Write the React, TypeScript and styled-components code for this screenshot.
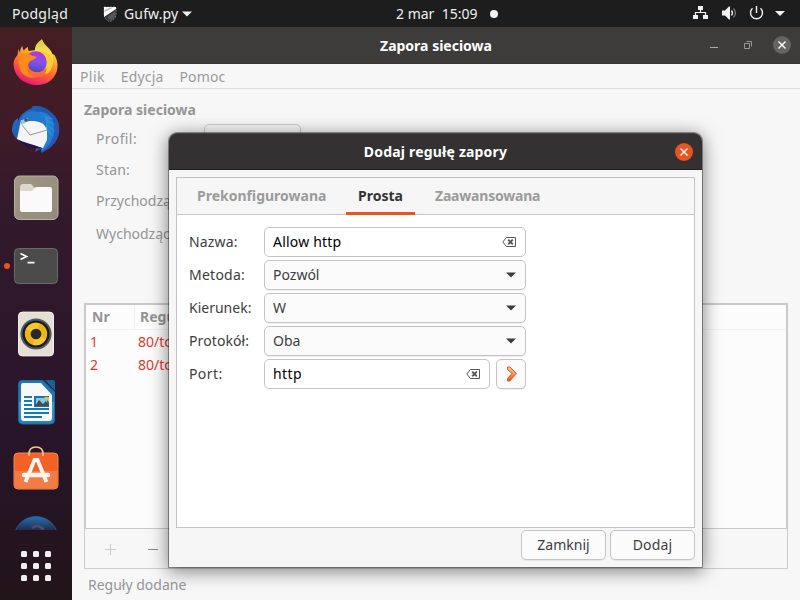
import React from "react";
import styled, { createGlobalStyle } from "styled-components";

const Global = createGlobalStyle`
  * { box-sizing: border-box; }
  html, body { margin: 0; padding: 0; }
  body { width: 800px; height: 600px; overflow: hidden; background: #f7f7f7;
    font-family: "Noto Sans", "Open Sans", sans-serif; font-size: 14px; line-height: 20px; color: #3d3d3d; }
`;

const Desktop = styled.div`
  width: 800px; height: 600px; display: flex; flex-direction: column; overflow: hidden; position: relative;
`;
const Label = styled.span<{ $ls?: number; $bold?: boolean }>`
  white-space: pre;
  letter-spacing: ${(p) => p.$ls ?? 0}px;
  font-weight: ${(p) => (p.$bold ? 700 : 400)};
`;

/* Top panel */
const TopBar = styled.header`
  flex: 0 0 27px; display: grid; grid-template-columns: 396px 1fr auto; align-items: center;
  background: #1d1d1d; color: #f0f0f0;
`;
const TopLeft = styled.div`
  display: flex; align-items: center; padding-left: 12px;
  & > svg:nth-of-type(1) { margin-left: 35px; margin-right: 7px; }
  & > svg:nth-of-type(2) { margin-left: 4px; }
`;
const Clock = styled.div`display: flex; align-items: center; gap: 13px;`;
const Dot = styled.i`width: 8px; height: 8px; border-radius: 50%; background: #f2f2f2;`;
const Tray = styled.div`display: flex; align-items: center; width: 108px;`;

const Main = styled.div`flex: 1; display: flex; min-height: 0;`;

/* Dock */
const Dock = styled.nav`
  flex: 0 0 72px; display: flex; flex-direction: column;
  background: linear-gradient(180deg, #451e23 0, #401b27 90px, #321a2c 185px, #2f182c 260px, #29152a 400px, #241420 500px, #221519 573px);
`;
const DockList = styled.div`
  height: 503px; overflow: hidden; display: flex; flex-direction: column; padding-top: 1px;
`;
const Slot = styled.div<{ $lift?: number }>`
  flex: 0 0 68px; display: flex; align-items: center; justify-content: center; position: relative;
  padding-bottom: ${(p) => p.$lift ?? 0}px;
  & > svg { display: block; }
`;
const Running = styled.i`
  position: absolute; left: 4px; top: 31px; width: 6px; height: 6px; border-radius: 50%; background: #e95420;
`;
const AppGrid = styled.div`
  flex: 1; display: grid; grid-template-columns: repeat(3, 6px); grid-auto-rows: 6px; gap: 6px;
  padding: 21px 0 0 21px;
  & > i { background: #f2f0ee; border-radius: 1.5px; }
`;

/* Main window */
const Window = styled.section`flex: 1; min-width: 0; display: flex; flex-direction: column; background: #f7f7f7; color: #959595;`;
const TitleBar = styled.div`
  flex: 0 0 37px; display: grid; grid-template-columns: 1fr auto 1fr; align-items: center;
  background: #3d3c3a; color: #fff; border-bottom: 1px solid #383735;
  & > span { padding-top: 1px; }
`;
const WinButtons = styled.div`
  display: flex; justify-content: flex-end; align-items: center; padding-right: 9px;
`;
const MenuBar = styled.div`
  flex: 0 0 25px; display: flex; padding: 3px 8px 0; gap: 16px; border-bottom: 1px solid #dddddd; color: #9b9b9b;
`;
const Content = styled.div`flex: 1; display: flex; flex-direction: column; padding: 11px 12px 0;`;
const Form = styled.div`
  height: 192px; margin-top: 4px; padding-left: 12px; display: grid; grid-template-columns: 108px 97px;
  grid-template-rows: 30px 31px 32px 34px; align-items: center; line-height: 20px; color: #959595;
`;
const ProfileCombo = styled.div`
  height: 30px; border: 1px solid #cbcbcb; border-radius: 5px; padding: 5px 0 0 11px; line-height: 18px;
`;
const Table = styled.div`
  height: 226px; margin-top: -13px; border: 2px solid #c9c9c9; border-bottom-width: 1px; background: #fcfcfc;
`;
const TableHead = styled.div`
  height: 25px; display: grid; grid-template-columns: 48px 1fr; border-bottom: 1px solid #f2f2f2; line-height: 23px;
  & > * { padding-left: 6px; }
  & > * + * { border-left: 1px solid #f0f0f0; padding-left: 5px; }
`;
const TableRow = styled.div`
  height: 23px; display: grid; grid-template-columns: 48px 1fr; color: #df382c; line-height: 23px; padding-left: 4px;
`;
const ListTools = styled.div`
  height: 40px; border: 1px solid #cdcdcd; border-top: 0; display: flex; align-items: center; padding-left: 20px; gap: 31px;
`;
const Status = styled.div`padding: 6px 4px;`;

/* Dialog, floating over the window */
const Dialog = styled.section`
  position: absolute; left: 169px; top: 133px; width: 533px; height: 434px;
  display: flex; flex-direction: column; border-radius: 8px 8px 0 0; background: #f6f6f6;
  box-shadow: 0 0 0 1px rgba(0,0,0,.36), 0 3px 18px 1px rgba(0,0,0,.5);
`;
const DialogTitle = styled.div`
  flex: 0 0 37px; border-radius: 8px 8px 0 0; background: #333131; border-bottom: 1px solid #222;
  border-top: 1px solid #454443; color: #fff;
  display: grid; grid-template-columns: 1fr auto 1fr; align-items: center; padding: 0 9px;
`;
const CloseCircle = styled.button<{ $bg: string }>`
  justify-self: end; width: 18px; height: 18px; border: 0; border-radius: 50%; padding: 0;
  background: ${(p) => p.$bg}; display: flex; align-items: center; justify-content: center;
`;
const Notebook = styled.div`
  margin: 7px 7px 0; height: 351px; border: 1px solid #c3c3c3; background: #fff; display: flex; flex-direction: column;
`;
const Tabs = styled.div`
  flex: 0 0 37px; min-height: 0; display: flex; background: #f6f6f6; border-bottom: 1px solid #c6c6c6; padding-left: 8px;
`;
const Tab = styled.div<{ $active?: boolean; $w: number }>`
  height: 37px; width: ${(p) => p.$w}px; padding-left: 12px; margin-right: 8px; line-height: 35px; color: ${(p) => (p.$active ? "#333" : "#9b9b9b")};
  ${(p) => p.$active && "box-shadow: inset 0 -3px #e95420;"}
`;
const Fields = styled.div`padding: 12px; display: flex; flex-direction: column; gap: 3px;`;
const Field = styled.div`
  height: 30px; display: grid; grid-template-columns: 75px 262px; align-items: center;
`;
const PortGroup = styled.div`display: grid; grid-template-columns: 226px 30px; gap: 6px;`;
const Box = styled.div<{ $entry?: boolean }>`
  height: 30px; border: 1px solid #c4c4c4; border-radius: 5px; display: flex; align-items: center; justify-content: space-between;
  padding: 0 9px 0 8px; background: ${(p) => (p.$entry ? "#fff" : "#fbfbfb")}; color: ${(p) => (p.$entry ? "#000" : "#3d3d3d")};
  ${(p) => !p.$entry && "box-shadow: 0 1px 1px rgba(0,0,0,.07);"}
`;
const IconButton = styled(Box)`justify-content: center; padding: 0 0 0 1px;`;
const Actions = styled.div`display: flex; justify-content: flex-end; gap: 4px; padding: 2px 7px 0;`;
const ActionButton = styled(Box)`width: 85px; justify-content: center; padding: 0;`;

const Caret = ({ c = "#3d3d3d" }: { c?: string }) => (
  <svg width="10" height="6" viewBox="0 0 10 6"><path d="M0 .5h10L5 5.5z" fill={c} /></svg>
);
const ClearIcon = () => (
  <svg width="14" height="10" viewBox="0 0 14 10">
    <path d="M4.500.500h9v9h-9L.800 5z" fill="none" stroke="#555" strokeWidth="1" />
    <path d="M6.200 2.700l4.600 4.600M10.800 2.700l-4.600 4.600" stroke="#555" strokeWidth="1.900" />
  </svg>
);
const Cross = () => (
  <svg width="8" height="8" viewBox="0 0 8 8"><path d="M.5.5l7 7M7.5.5l-7 7" stroke="#fff" strokeWidth="1.4" /></svg>
);

const Firefox = () => (
  <svg width="46" height="47" viewBox="1 0 46 47">
    <defs>
      <linearGradient id="ffa" x1=".75" y1="0" x2=".3" y2="1"><stop offset="0" stopColor="#fff44f" /><stop offset=".33" stopColor="#ffb22c" /><stop offset=".62" stopColor="#ff6634" /><stop offset="1" stopColor="#e8117f" /></linearGradient>
      <linearGradient id="ffb" x1=".6" y1="0" x2=".4" y2="1"><stop offset="0" stopColor="#b833e1" /><stop offset=".5" stopColor="#8055ec" /><stop offset="1" stopColor="#4b45ad" /></linearGradient>
      <linearGradient id="ffc" x1="0" y1="0" x2="0" y2="1"><stop offset="0" stopColor="#d3c64b" /><stop offset=".4" stopColor="#ffe34b" /><stop offset="1" stopColor="#ffbc31" /></linearGradient>
    </defs>
    <path d="M8 15c0-3 1-6 2.500-7 0 2 .5 3.500 1.500 4.500 1-2 2.500-3 4-3.500-.3 2 .2 3.500 1 4 3-1 7-1 10 0 2-3 .5-7 3.500-11 1 5 7 7 10 14l2 1c3 5 4 11 2 17-3 8-10 13-19 13C13 47 2 39 1.500 26c0-4 2-7 4-9l1-6z" fill="url(#ffa)" />
    <path d="M23 12c0-5 3-8 7-11 .8 6 5.500 8 9 13 5 7 2 18-6 22 2-6 0-13-7-15-5-1.500-7-6-3-9z" fill="url(#ffc)" />
    <circle cx="24" cy="24" r="10.800" fill="url(#ffb)" />
    <path d="M7 19c2-4 8-5 12-2 2 1.500 5 .8 5.500 2.300-1 2-4 2-5 3-3 1.500-4 4-3 7 2 5 10 7 16 3-3 7-13 10-20 5-5-4-6-10-6-15.500z" fill="#ff8a16" />
    <path d="M15.500 28c3 7 13 9 19 2 0 7-6 10-12 9-5-1-8-6-7-11z" fill="#ff6b35" />
    <path d="M28 13c7-1 12 4 12 12 0 7-3 10-6 11 2-4 2-7 1-11 0-5-3-9-7-12z" fill="#ffcd35" />
  </svg>
);
const Thunderbird = () => (
  <svg width="48" height="48" viewBox="0 0 48 48">
    <defs><linearGradient id="tb" x1="0" y1="0" x2="1" y2=".8"><stop offset="0" stopColor="#2675d2" /><stop offset=".45" stopColor="#1c59b0" /><stop offset="1" stopColor="#3156b5" /></linearGradient></defs>
    <path d="M19 1c8-3 16 1 21 6 7 6 9 15 6 24-3 8-10 13-17 16l1-5-7 4 2-7C15 40 3 36 0 25c0-6 2-11 6-13l0 3c3-7 8-11 15-13z" fill="url(#tb)" />
    <path d="M24 6c12-2 20 7 18 21-2 11-8 15-13 19l1-6-5 2 6-12z" fill="#237ed1" />
    <path d="M33 10l9 3-7 0 9 6-9-2 9 9-9-5 7 11-8-7 4 10-6-7" fill="#2b8ed8" />
    <path d="M9 14l24 1 2 10 0 9-4 8C20 39 9 37 5 33z" fill="#f5f5f5" />
    <path d="M10 19l8 10 17-5" fill="none" stroke="#999" strokeWidth="1" />
    <path d="M5 33c7 4 16 5 25 9 0 0-15 3-25-9z" fill="#271150" />
    <path d="M9 18l1-6c3-7 13-9 19-4 5 4 6 10 5 14-2-5-7-7-14-7-6 0-8 2-11 3z" fill="#2378ce" />
    <path d="M9 19l1-5 6-2-1 4z" fill="#83d3ed" /><circle cx="14" cy="14" r="1.800" fill="#524d46" />
  </svg>
);
const Files = () => (
  <svg width="46" height="46" viewBox="0 0 46 46">
    <defs><linearGradient id="fi" x1="0" y1="0" x2="1" y2="1"><stop offset="0" stopColor="#a09882" /><stop offset="1" stopColor="#918b7b" /></linearGradient></defs>
    <rect x="1.500" y="1" width="43.500" height="43.500" rx="5" fill="url(#fi)" stroke="#b9b29e" />
    <path d="M7 12q0-3 3-3h8l4 4h13v8H7z" fill="#ddd8cb" />
    <path d="M7 16h12l4-4h14q2 0 2 2v21q0 2-2 2H9q-2 0-2-2z" fill="#fbfafa" />
  </svg>
);
const Terminal = () => (
  <svg width="44" height="36" viewBox="0 0 44 36">
    <rect x=".5" y=".5" width="43" height="35" rx="4" fill="#4b4b4b" stroke="#6a6a6a" />
    <path d="M6.500 5.500l6 3-6 3M13.500 14.700h7" fill="none" stroke="#fff" strokeWidth="1.700" />
  </svg>
);
const Speaker = () => (
  <svg width="36" height="46" viewBox="0 0 37 46">
    <rect x=".5" y=".5" width="36" height="45" rx="4" fill="#e5e0d5" stroke="#f4f1ec" />
    <circle cx="18.500" cy="23" r="16" fill="#515b60" /><circle cx="18.500" cy="23" r="14" fill="#1c1b25" />
    <circle cx="18.500" cy="23" r="11.500" fill="#edb414" /><path d="M18.500 23L8 18A11.500 11.500 0 0 1 22 12zM18.500 23L29 28A11.500 11.500 0 0 1 15 34z" fill="#f8c52b" />
    <circle cx="18.500" cy="23" r="5.500" fill="#292828" />
  </svg>
);
const Writer = () => (
  <svg width="37" height="45" viewBox="0 0 37 45">
    <defs><linearGradient id="wr" x1="0" y1="0" x2="0" y2="1"><stop offset=".49" stopColor="#1979b4" /><stop offset=".5" stopColor="#429acd" /><stop offset="1" stopColor="#277fb3" /></linearGradient></defs>
    <path d="M4 .5h21L36.500 12v28q0 4-4 4H4.500q-4 0-4-4V4Q.5.5 4 .5z" fill="url(#wr)" stroke="#1a6c9d" />
    <path d="M27 0h8q2 0 2 2v9z" fill="#146492" />
    <path d="M5 3h18l11 12v23q0 3-3 3H6q-3 0-3-3V5q0-2 2-2z" fill="#f8f8f8" />
    <path d="M6 17h8M6 21h8M6 25h8M6 29h25M6 33h25M6 37h18" stroke="#1479b9" strokeWidth="2" />
    <path d="M17 17h13v9H17z" fill="#83cce9" stroke="#1775ae" strokeWidth="2" /><path d="M17 26l4-6 4 4 3-3 3 5z" fill="#4b4b49" /><path d="M26 17h5v5z" fill="#f1bb27" />
  </svg>
);
const Software = () => (
  <svg width="46" height="44" viewBox="0 0 46 44">
    <path d="M5 7h36q4 0 4 4v28q0 4-4 4H5q-4 0-4-4V11q0-4 4-4z" fill="#f26127" stroke="#f78556" />
    <path d="M2 25h42v14q0 3-3 3H5q-3 0-3-3z" fill="#f37b45" />
    <path d="M16 10V8q0-7 7-7t7 7v2" fill="none" stroke="#eec998" strokeWidth="1.600" />
    <path d="M12.500 36l9-22h3l9 22" fill="none" stroke="#fff5f0" strokeWidth="3.800" /><path d="M11 29h24" stroke="#fff5f0" strokeWidth="4.500" strokeLinecap="round" />
  </svg>
);
const Help = () => (
  <svg width="46" height="46" viewBox="0 0 46 46">
    <defs><linearGradient id="he" x1="0" y1="0" x2="0" y2="1"><stop offset="0" stopColor="#2372b5" /><stop offset=".33" stopColor="#242543" /></linearGradient></defs>
    <circle cx="23" cy="23.500" r="22" fill="url(#he)" stroke="#346795" strokeWidth=".7" /><path d="M19 13q5-4 10 0 3 3-2 7" fill="none" stroke="#4f4c68" strokeWidth="2.500" />
  </svg>
);
const icons = [Firefox, Thunderbird, Files, Terminal, Speaker, Writer, Software, Help];

const Shield = () => (
  <svg width="14" height="16" viewBox="0 0 14 16">
    <path d="M1 1h12v8q-1 5-6 6.500Q2 14 1 9z" fill="#303030" stroke="#888" strokeWidth=".8" strokeDasharray="2 1" />
    <path d="M1 1h12v2L1 11z" fill="#fff" /><path d="M1.500 4l6-2.500h3L1.500 6z" fill="#bbb" />
    <path d="M12.500 5v4q-1 4-5 5.500L4 11z" fill="#555" />
  </svg>
);

export default function App() {
  return (
    <>
      <Global />
      <Desktop>
        <TopBar>
          <TopLeft>
            <Label $ls={0.25}>Podgląd</Label><Shield /><Label $ls={0.15}>Gufw.py</Label><Caret c="#f0f0f0" />
          </TopLeft>
          <Clock><Label>2 mar  15:09</Label><Dot /></Clock>
          <Tray>
            <svg width="108" height="27" viewBox="0 0 108 27">
              <path d="M6 6h5v4H6zM1 15h5v4H1zM11 15h5v4h-5z" fill="#f2f2f2" />
              <path d="M8.500 10v3M3.500 15v-2.500h10V15" fill="none" stroke="#f2f2f2" strokeWidth="1.200" />
              <path d="M30 10.500h3l4-4h1v13h-1l-4-4h-3z" fill="#f2f2f2" />
              <path d="M39.500 10.500q2 2.500 0 5" fill="none" stroke="#f2f2f2" strokeWidth="1.300" /><path d="M41.500 8.500q4 4.500 0 9" fill="none" stroke="#777" strokeWidth="1.300" />
              <path d="M60.500 8.300a6 6 0 1 0 8 0M64.500 6v7" fill="none" stroke="#f2f2f2" strokeWidth="1.400" />
              <path d="M83 11h10l-5 5z" fill="#f2f2f2" />
            </svg>
          </Tray>
        </TopBar>
        <Main>
          <Dock>
            <DockList>
              {icons.map((Icon, i) => (
                <Slot key={i} $lift={i === 6 ? 4 : i === 0 ? 1 : 0}>{i === 3 && <Running />}<Icon /></Slot>
              ))}
            </DockList>
            <AppGrid>{Array.from({ length: 9 }, (_, i) => <i key={i} />)}</AppGrid>
          </Dock>
          <Window>
            <TitleBar>
              <span /><Label $bold>Zapora sieciowa</Label>
              <WinButtons>
                <svg width="63" height="18" viewBox="0 0 63 18"><path d="M0 11.500h8" stroke="#aaa" /><path d="M34.500 7.500h5v5h-5zM36.500 5.500h5v5" fill="none" stroke="#999" /></svg>
                <CloseCircle $bg="#656462"><Cross /></CloseCircle>
              </WinButtons>
            </TitleBar>
            <MenuBar><Label $ls={0.4}>Plik</Label><Label $ls={0.15}>Edycja</Label><Label $ls={0.15}>Pomoc</Label></MenuBar>
            <Content>
              <Label $bold>Zapora sieciowa</Label>
              <Form>
                <Label $ls={0.4}>Profil:</Label><ProfileCombo>Public</ProfileCombo>
                <Label $ls={0.2}>Stan:</Label><span />
                <Label>Przychodzące:</Label><span />
                <Label>Wychodzące:</Label><span />
              </Form>
              <Table>
                <TableHead><Label $bold>Nr</Label><Label $bold>Reguła</Label></TableHead>
                <TableRow><Label>1</Label><Label>80/tcp</Label></TableRow>
                <TableRow><Label>2</Label><Label>80/tcp</Label></TableRow>
              </Table>
              <ListTools>
                <svg width="12" height="12" viewBox="0 0 12 12"><path d="M0 6.500h11M5.500 1v11" stroke="#ccc" /></svg>
                <svg width="10" height="12" viewBox="0 0 10 12"><path d="M0 6.500h10" stroke="#8a8a8a" /></svg>
              </ListTools>
              <Status><Label>Reguły dodane</Label></Status>
            </Content>
          </Window>
        </Main>
        <Dialog>
          <DialogTitle><span /><Label $bold $ls={0.2}>Dodaj regułę zapory</Label><CloseCircle $bg="#e95420"><Cross /></CloseCircle></DialogTitle>
          <Notebook>
            <Tabs>
              <Tab $w={153}><Label $bold>Prekonfigurowana</Label></Tab>
              <Tab $w={69} $active><Label $bold>Prosta</Label></Tab>
              <Tab $w={129}><Label $bold $ls={-0.2}>Zaawansowana</Label></Tab>
            </Tabs>
            <Fields>
              <Field><Label $ls={0.15}>Nazwa:</Label><Box $entry><Label $ls={0.2}>Allow http</Label><ClearIcon /></Box></Field>
              <Field><Label $ls={0.25}>Metoda:</Label><Box><Label>Pozwól</Label><Caret /></Box></Field>
              <Field><Label>Kierunek:</Label><Box><Label>W</Label><Caret /></Box></Field>
              <Field><Label $ls={0.1}>Protokół:</Label><Box><Label>Oba</Label><Caret /></Box></Field>
              <Field><Label $ls={0.4}>Port:</Label>
                <PortGroup>
                  <Box $entry><Label $ls={0.4}>http</Label><ClearIcon /></Box>
                  <IconButton><svg width="12" height="16" viewBox="0 0 12 16">
                    <defs><linearGradient id="ar" x1="0" y1="0" x2="0" y2="1"><stop offset="0" stopColor="#f8cf98" /><stop offset="1" stopColor="#e9581a" /></linearGradient></defs>
                    <path d="M1.500 1h2.300l6.700 6.500L3.800 15H1.500v-2.500L6 7.500 1.500 3.500z" fill="url(#ar)" stroke="#d9572a" strokeWidth="1" />
                  </svg></IconButton>
                </PortGroup>
              </Field>
            </Fields>
          </Notebook>
          <Actions><ActionButton><Label>Zamknij</Label></ActionButton><ActionButton><Label $ls={0.15}>Dodaj</Label></ActionButton></Actions>
        </Dialog>
      </Desktop>
    </>
  );
}
